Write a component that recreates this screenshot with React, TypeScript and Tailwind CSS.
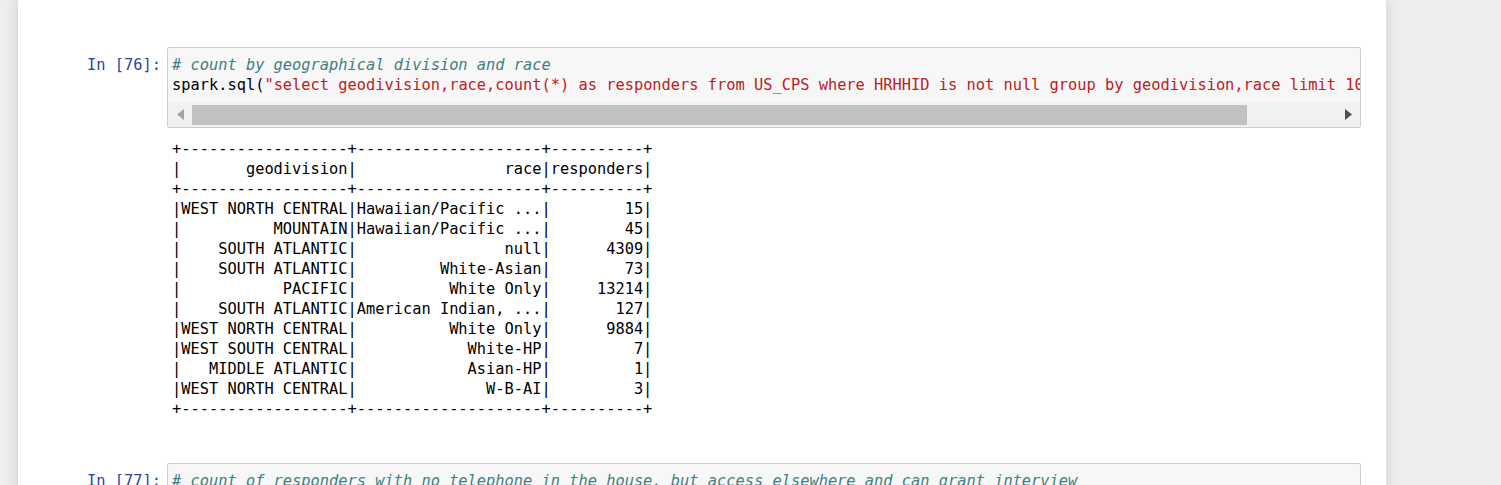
import React from 'react';

const mono = "font-['DejaVu_Sans_Mono','Liberation_Mono',monospace] text-[15.35px] leading-[20px]";

const header = ['geodivision', 'race', 'responders'];
const widths = [18, 20, 10];
const rows: [string, string, string][] = [
    ['WEST NORTH CENTRAL', 'Hawaiian/Pacific ...', '15'],
    ['MOUNTAIN', 'Hawaiian/Pacific ...', '45'],
    ['SOUTH ATLANTIC', 'null', '4309'],
    ['SOUTH ATLANTIC', 'White-Asian', '73'],
    ['PACIFIC', 'White Only', '13214'],
    ['SOUTH ATLANTIC', 'American Indian, ...', '127'],
    ['WEST NORTH CENTRAL', 'White Only', '9884'],
    ['WEST SOUTH CENTRAL', 'White-HP', '7'],
    ['MIDDLE ATLANTIC', 'Asian-HP', '1'],
    ['WEST NORTH CENTRAL', 'W-B-AI', '3'],
];

const sep = '+' + widths.map((w) => '-'.repeat(w)).join('+') + '+';
const fmt = (cells: string[]) => '|' + cells.map((c, i) => c.padStart(widths[i])).join('|') + '|';
const tableText = [sep, fmt(header), sep, ...rows.map(fmt), sep].join('\n');

const Prompt = ({ n }: { n: number }) => (
    <div className={`w-[125px] shrink-0 text-right pr-[6px] pt-[8px] text-[#303F9F] ${mono}`}>In [{n}]:</div>
);

const HScroll = () => (
    <div className="h-[25px] bg-[#f1f1f1] flex items-center">
        <div className="w-[24px] h-full flex items-center justify-center shrink-0">
            <svg width="7" height="11" viewBox="0 0 7 11"><path d="M7 0 L0 5.5 L7 11 Z" fill="#a3a3a3" /></svg>
        </div>
        <div className="w-[1055px] h-[20px] bg-[#c1c1c1]" />
        <div className="flex-1" />
        <div className="w-[24px] h-full flex items-center justify-center shrink-0">
            <svg width="7" height="11" viewBox="0 0 7 11"><path d="M0 0 L7 5.5 L0 11 Z" fill="#505050" /></svg>
        </div>
    </div>
);

export default function App() {
    return (
        <div className="min-h-screen bg-[#eeeeee] flex overflow-hidden">
            <div className="ml-[18px] w-[1368px] shrink-0 bg-white shadow-[0_0_12px_1px_rgba(87,87,87,0.2)] pt-[47px] pl-[24px] pr-[25px] min-h-screen">
                {/* cell 76 */}
                <div className="flex">
                    <Prompt n={76} />
                    <div className="flex-1 min-w-0 border border-[#cfcfcf] rounded-[2px] bg-[#f7f7f7]">
                        <div className={`pl-[4px] pt-[7px] pb-[7px] overflow-hidden whitespace-pre ${mono}`}>
                            <div className="text-[#408080] italic"># count by geographical division and race</div>
                            <div className="text-black">
                                spark.sql(<span className="text-[#BA2121]">"select geodivision,race,count(*) as responders from US_CPS where HRHHID is not null group by geodivision,race limit 10")</span>.show()
                            </div>
                        </div>
                        <HScroll />
                    </div>
                </div>
                <div className="flex mt-[11px]">
                    <div className="w-[125px] shrink-0" />
                    <pre className={`pl-[5px] text-black ${mono}`}>{tableText}</pre>
                </div>

                {/* cell 77 */}
                <div className="flex mt-[44px]">
                    <Prompt n={77} />
                    <div className="flex-1 min-w-0 border border-[#cfcfcf] rounded-[2px] bg-[#f7f7f7]">
                        <div className={`pl-[4px] pt-[7px] pb-[7px] overflow-hidden whitespace-pre ${mono}`}>
                            <div className="text-[#408080] italic"># count of responders with no telephone in the house, but access elsewhere and can grant interview</div>
                            <div className="text-black">spark.sql("select count(*) from US_CPS")</div>
                        </div>
                    </div>
                </div>
            </div>
            <div className="flex-1" />
        </div>
    );
}
